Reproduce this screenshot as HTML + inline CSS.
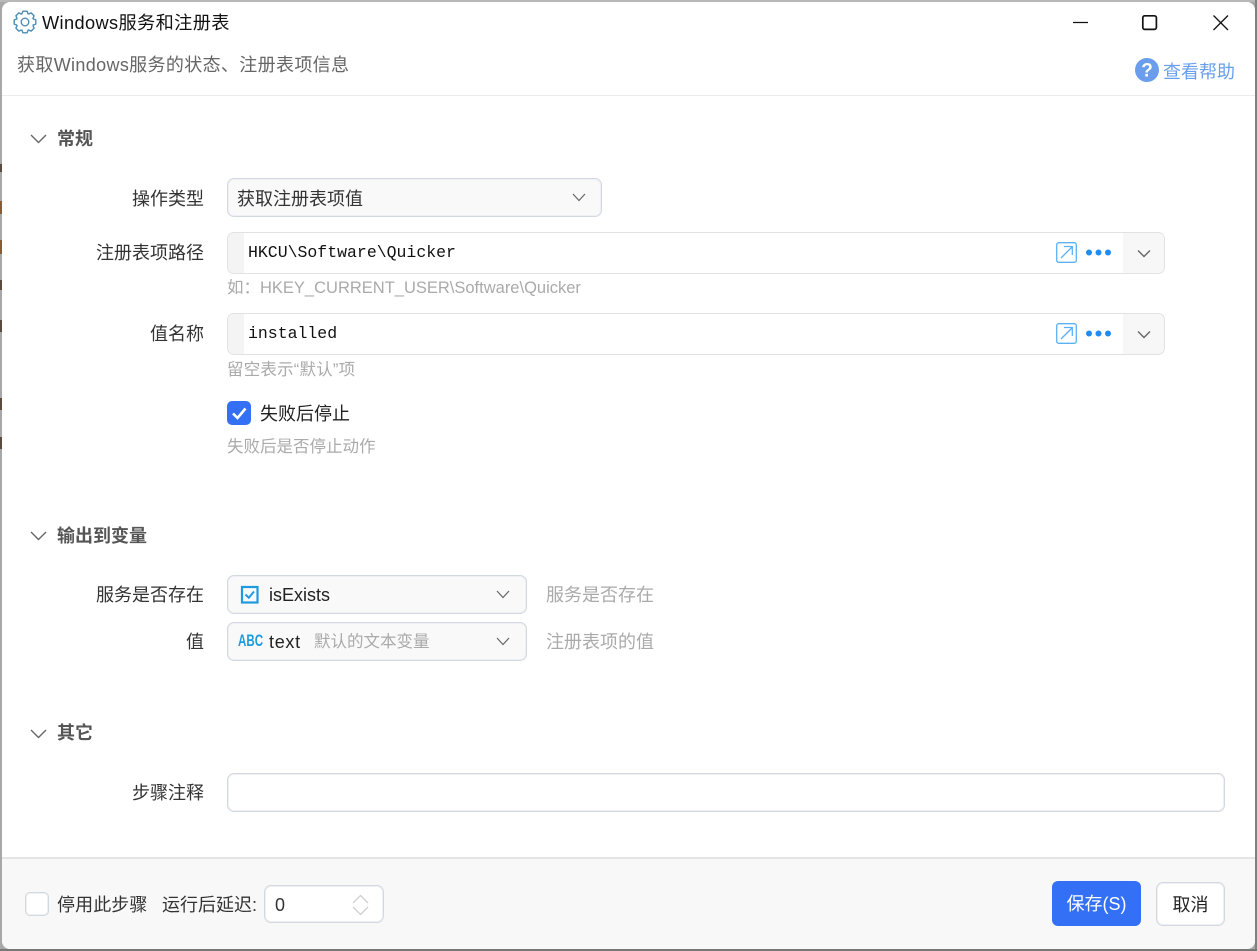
<!DOCTYPE html>
<html lang="zh-CN"><head><meta charset="utf-8"><title>Windows服务和注册表</title>
<style>
html,body{margin:0;padding:0;width:1257px;height:951px;overflow:hidden;background:#a8a8a8}
body{position:relative;font-family:"Liberation Sans","Noto Sans CJK SC",sans-serif;font-size:18px;color:#222}
#win{position:absolute;left:2px;top:2px;width:1253px;height:947px;background:#fff;border-radius:8px;overflow:hidden}
.a{position:absolute;white-space:nowrap}
.t{position:absolute;white-space:nowrap;line-height:24px;height:24px}
.r{text-align:right;width:190px;left:12px;color:#333}
.h{font-weight:bold;color:#555}
.hint{color:#aaa;font-size:16.5px}
.box{position:absolute;box-sizing:border-box;border:1px solid #d3d8e0;box-shadow:inset 0 0 0 1px #eef0f3;border-radius:7px;background:#f9f9f9}
.mono{font-family:"Liberation Mono",monospace;font-size:16.5px;color:#111}
.m{position:absolute;left:0;width:2px;background:#5a4a40}
svg{position:absolute;overflow:visible}
</style></head><body>
<div class="a" style="left:0;top:0;width:1257px;height:2px;background:#b8b8b8"></div>
<div class="a" style="left:1255px;top:0;width:2px;height:951px;background:#808080"></div>
<div class="a" style="left:0;top:949px;width:1257px;height:2px;background:#777"></div>
<div class="m" style="top:164px;height:8px"></div>
<div class="m" style="top:201px;height:13px;background:#8a5a30"></div>
<div class="m" style="top:240px;height:14px;background:#8a5a30"></div>
<div class="m" style="top:280px;height:10px"></div>
<div class="m" style="top:320px;height:12px"></div>
<div class="m" style="top:398px;height:12px"></div>
<div class="m" style="top:437px;height:12px"></div>
<div id="win">
<svg style="left:11px;top:8px" width="24" height="24" viewBox="0 0 24 24" fill="none" stroke="#4a8db5" stroke-width="1.4" stroke-linejoin="round"><circle cx="12" cy="12" r="3.8"/><g transform="translate(12 12)"><path id="g" d="M7.88 -3.18L10.8 -2.1L10.8 2.1L7.88 3.18L7.8 3.3"/><path d="M7.88 -3.18L10.8 -2.1L10.8 2.1L7.88 3.18L7.8 3.3" transform="rotate(45)"/><path d="M7.88 -3.18L10.8 -2.1L10.8 2.1L7.88 3.18L7.8 3.3" transform="rotate(90)"/><path d="M7.88 -3.18L10.8 -2.1L10.8 2.1L7.88 3.18L7.8 3.3" transform="rotate(135)"/><path d="M7.88 -3.18L10.8 -2.1L10.8 2.1L7.88 3.18L7.8 3.3" transform="rotate(180)"/><path d="M7.88 -3.18L10.8 -2.1L10.8 2.1L7.88 3.18L7.8 3.3" transform="rotate(225)"/><path d="M7.88 -3.18L10.8 -2.1L10.8 2.1L7.88 3.18L7.8 3.3" transform="rotate(270)"/><path d="M7.88 -3.18L10.8 -2.1L10.8 2.1L7.88 3.18L7.8 3.3" transform="rotate(315)"/></g></svg>
<div class="t" style="left:40px;top:9px;color:#111;font-size:18.2px;letter-spacing:.38px">Windows服务和注册表</div>
<div class="t" style="left:15px;top:51px;color:#666;font-size:18px;letter-spacing:.35px">获取Windows服务的状态、注册表项信息</div>

<svg style="left:1071px;top:19px" width="16" height="4"><path d="M0 1.5H15" stroke="#111" stroke-width="1.3"/></svg>
<svg style="left:1140px;top:13px" width="16" height="16" fill="none"><rect x=".8" y=".8" width="13.6" height="13.6" rx="2" stroke="#111" stroke-width="1.7"/></svg>
<svg style="left:1211px;top:13px" width="16" height="16" fill="none"><path d="M.5 .5L15 15M15 .5L.5 15" stroke="#111" stroke-width="1.3"/></svg>

<svg style="left:1133px;top:56px" width="24" height="24"><circle cx="12" cy="12" r="12" fill="#6a9eec"/><text x="12" y="18.500" text-anchor="middle" font-family="Liberation Sans" font-weight="bold" font-size="19" fill="#fff">?</text></svg>
<div class="t" style="left:1161px;top:58px;color:#6a9eec">查看帮助</div>
<div class="a" style="left:0;top:93px;width:1253px;height:1px;background:#ececec"></div>

<svg style="left:28px;top:131px" width="18" height="12" fill="none"><path d="M1 2L8.5 9.5L16 2" stroke="#666" stroke-width="1.4"/></svg>
<div class="t h" style="left:55px;top:125px">常规</div>

<div class="t r" style="top:185px">操作类型</div>
<div class="box" style="left:225px;top:176px;width:375px;height:39px"></div>
<div class="t" style="left:235px;top:185px;color:#333">获取注册表项值</div>
<svg style="left:570px;top:191px" width="14" height="10" fill="none"><path d="M1 1L7 7.5L13 1" stroke="#666" stroke-width="1.2"/></svg>

<div class="t r" style="top:239px">注册表项路径</div>
<div class="box" style="left:225px;top:230px;width:938px;height:42px;background:#fff;overflow:hidden;border-color:#e2e2e2;box-shadow:none"><div class="a" style="left:0;top:0;width:16px;height:40px;background:#f4f4f4"></div><div class="a" style="right:0;top:0;width:41px;height:40px;background:#f7f7f7"></div></div>
<div class="t mono" style="left:246px;top:239px">HKCU\Software\Quicker</div>
<svg style="left:1054px;top:240px" width="21" height="21" fill="none" stroke="#5cb0f5" stroke-width="1.3"><rect x=".7" y=".7" width="19.6" height="19.6" rx="2"/><path d="M5 16L16 5M8 4.500H16.300V13" /></svg>
<svg style="left:1084px;top:247px" width="26" height="7" fill="#1e8cf0"><circle cx="3" cy="3.500" r="3"/><circle cx="12.500" cy="3.500" r="3"/><circle cx="22" cy="3.500" r="3"/></svg>
<svg style="left:1135px;top:247px" width="14" height="10" fill="none"><path d="M1 1.500L7 7.500L13 1.500" stroke="#666" stroke-width="1.4"/></svg>
<div class="t hint" style="left:225px;top:274px">如：HKEY_CURRENT_USER\Software\Quicker</div>

<div class="t r" style="top:320px">值名称</div>
<div class="box" style="left:225px;top:311px;width:938px;height:42px;background:#fff;overflow:hidden;border-color:#e2e2e2;box-shadow:none"><div class="a" style="left:0;top:0;width:16px;height:40px;background:#f4f4f4"></div><div class="a" style="right:0;top:0;width:41px;height:40px;background:#f7f7f7"></div></div>
<div class="t mono" style="left:246px;top:320px">installed</div>
<svg style="left:1054px;top:321px" width="21" height="21" fill="none" stroke="#5cb0f5" stroke-width="1.3"><rect x=".7" y=".7" width="19.6" height="19.6" rx="2"/><path d="M5 16L16 5M8 4.500H16.300V13" /></svg>
<svg style="left:1084px;top:328px" width="26" height="7" fill="#1e8cf0"><circle cx="3" cy="3.500" r="3"/><circle cx="12.500" cy="3.500" r="3"/><circle cx="22" cy="3.500" r="3"/></svg>
<svg style="left:1135px;top:328px" width="14" height="10" fill="none"><path d="M1 1.500L7 7.500L13 1.500" stroke="#666" stroke-width="1.4"/></svg>
<div class="t hint" style="left:225px;top:356px;letter-spacing:.2px">留空表示“默认”项</div>

<div class="a" style="left:225px;top:399px;width:24px;height:24px;background:#3370f5;border-radius:5px"></div>
<svg style="left:225px;top:399px" width="24" height="24" fill="none"><path d="M6 12.500L10.500 17L18.500 7.500" stroke="#fff" stroke-width="2.600"/></svg>
<div class="t" style="left:258px;top:400px;color:#222">失败后停止</div>
<div class="t hint" style="left:225px;top:433px">失败后是否停止动作</div>

<svg style="left:28px;top:528px" width="18" height="12" fill="none"><path d="M1 2L8.500 9.500L16 2" stroke="#666" stroke-width="1.400"/></svg>
<div class="t h" style="left:55px;top:522px">输出到变量</div>

<div class="t r" style="top:581px">服务是否存在</div>
<div class="box" style="left:225px;top:573px;width:300px;height:39px"></div>
<svg style="left:239px;top:584px" width="18" height="18" fill="none" stroke="#1e9be0"><rect x="1" y="1" width="15.500" height="15.500" stroke-width="2.200"/><path d="M4.500 8.500L7.800 11.800L13 5.500" stroke-width="2"/></svg>
<div class="t" style="left:267px;top:581px;color:#222">isExists</div>
<svg style="left:494px;top:588px" width="14" height="10" fill="none"><path d="M1 1L7 7.500L13 1" stroke="#666" stroke-width="1.200"/></svg>
<div class="t" style="left:544px;top:581px;color:#aaa">服务是否存在</div>

<div class="t r" style="top:628px">值</div>
<div class="box" style="left:225px;top:620px;width:300px;height:39px"></div>
<div class="t" style="left:236px;top:627px;color:#1e9be0;font-weight:bold;font-size:17px;transform:scaleX(.68);transform-origin:left;font-family:'Liberation Sans',sans-serif">ABC</div>
<div class="t" style="left:267px;top:628px;color:#222;letter-spacing:.7px">text</div>
<div class="t" style="left:312px;top:628px;color:#aaa;font-size:16.500px">默认的文本变量</div>
<svg style="left:494px;top:635px" width="14" height="10" fill="none"><path d="M1 1L7 7.500L13 1" stroke="#666" stroke-width="1.200"/></svg>
<div class="t" style="left:544px;top:628px;color:#aaa">注册表项的值</div>

<svg style="left:28px;top:726px" width="18" height="12" fill="none"><path d="M1 2L8.500 9.500L16 2" stroke="#666" stroke-width="1.400"/></svg>
<div class="t h" style="left:55px;top:719px">其它</div>

<div class="t r" style="top:779px">步骤注释</div>
<div class="box" style="left:225px;top:771px;width:998px;height:39px;background:#fff"></div>

<div class="a" style="left:0;top:855px;width:1253px;height:92px;background:#f8f8f8;border-top:2px solid #e4e4e4;box-sizing:border-box"></div>
<div class="box" style="left:23px;top:890px;width:24px;height:24px;background:#fff;border-radius:5px"></div>
<div class="t" style="left:55px;top:891px;color:#333;letter-spacing:.1px">停用此步骤</div>
<div class="t" style="left:160px;top:891px;color:#333">运行后延迟:</div>
<div class="box" style="left:262px;top:883px;width:120px;height:38px;background:#fff"></div>
<div class="t" style="left:273px;top:891px;color:#333">0</div>
<svg style="left:350px;top:892px" width="18" height="22" fill="none" stroke="#cfcfcf" stroke-width="1.300"><path d="M1 9L8.500 1.500L16 9M1 13L8.500 20.500L16 13"/></svg>
<div class="a" style="left:1050px;top:879px;width:89px;height:45px;background:#3370f5;border-radius:6px;color:#fff;text-align:center;line-height:47px">保存(S)</div>
<div class="box" style="left:1154px;top:880px;width:69px;height:44px;background:#fff;text-align:center;line-height:44px;color:#222">取消</div>
</div>
</body></html>
